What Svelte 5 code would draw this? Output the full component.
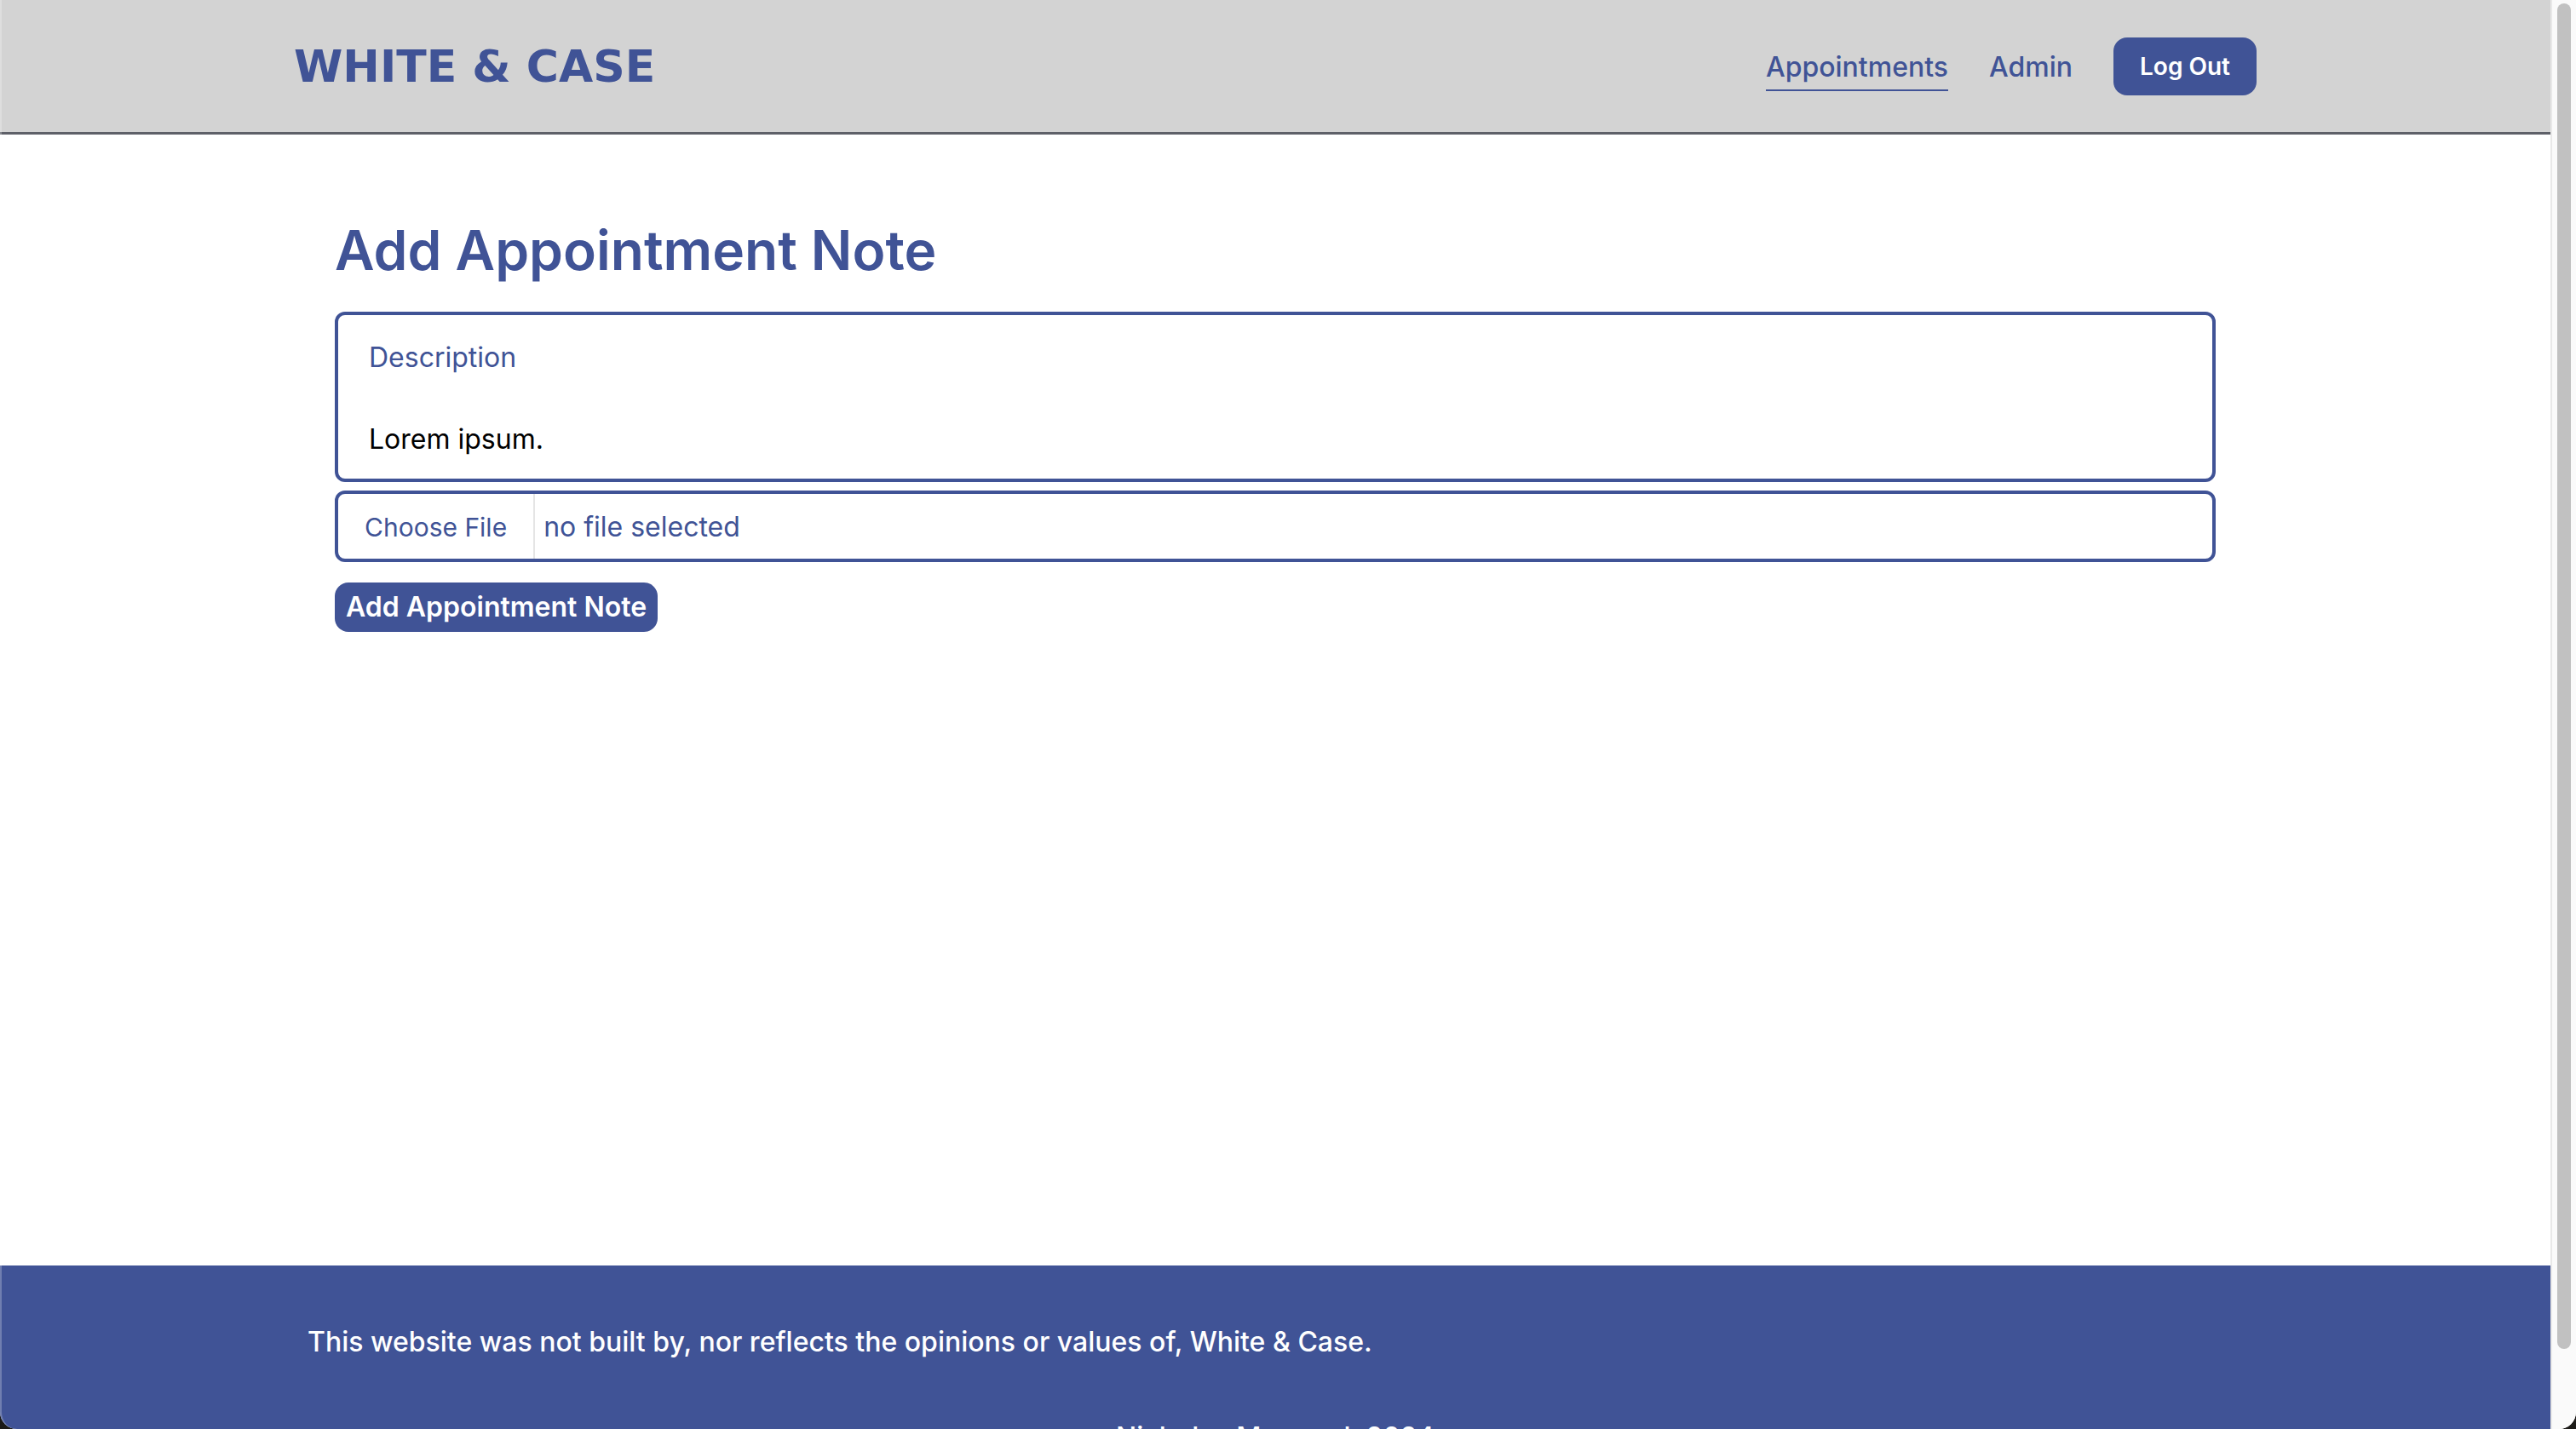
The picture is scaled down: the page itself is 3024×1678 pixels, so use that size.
<script>
  let description = $state('Lorem ipsum.');
  let files = $state(null);
  let fileName = $derived(files?.[0]?.name ?? 'no file selected');
</script>

<div class="window">
  <div class="page">
    <header>
      <div class="bar">
        <a class="logo" href="/">WHITE &amp; CASE</a>
        <nav>
          <a class="current" href="/appointments" aria-current="page">Appointments</a>
          <a href="/admin">Admin</a>
          <button class="logout" type="button">Log Out</button>
        </nav>
      </div>
    </header>

    <main>
      <h1>Add Appointment Note</h1>
      <form onsubmit={(e) => e.preventDefault()}>
        <div class="field">
          <label for="description">Description</label>
          <input id="description" type="text" bind:value={description} />
        </div>
        <label class="file">
          <span class="choose">Choose File</span>
          <span class="name">{fileName}</span>
          <input type="file" bind:files />
        </label>
        <button class="submit" type="submit">Add Appointment Note</button>
      </form>
    </main>

    <footer>
      <p>This website was not built by, nor reflects the opinions or values of, White &amp; Case.</p>
      <p class="credit">Nicholas Maynard, 2024</p>
    </footer>
  </div>
  <div class="track"><div class="thumb"></div></div>
</div>

<style>
  :global(body) {
    background: #1c1b18;
    overflow: hidden;
  }

  .window {
    --blue: #405396;
    position: relative;
    display: flex;
    height: 100vh;
    overflow: hidden;
    border-radius: 0 0 20px 20px;
    background: #fff;
    color: var(--blue);
    font-family: Inter, 'Liberation Sans', sans-serif;
    font-size: 32px;
    line-height: 48px;
  }

  .window::after {
    content: '';
    position: absolute;
    inset: 0;
    border-left: 2px solid rgba(255, 255, 255, 0.25);
    border-radius: 0 0 20px 20px;
    pointer-events: none;
  }

  .page {
    flex: 1;
    display: flex;
    flex-direction: column;
    min-width: 0;
    overflow: hidden;
  }

  header {
    flex: none;
    background: #d3d3d3;
    border-bottom: 3px solid #5e6068;
  }

  .bar {
    display: flex;
    align-items: center;
    justify-content: space-between;
    max-width: 2304px;
    margin: 0 auto;
    padding: 44px 0 43px;
  }

  .logo {
    color: var(--blue);
    font-family: 'DejaVu Sans', sans-serif;
    font-size: 52px;
    font-weight: 700;
    text-decoration: none;
  }

  nav {
    display: flex;
    align-items: center;
    gap: 48px;
  }

  nav a {
    padding: 6px 0 2px;
    border-bottom: 2px solid transparent;
    color: var(--blue);
    font-weight: 500;
    text-decoration: none;
  }

  nav a.current {
    border-color: var(--blue);
  }

  button {
    border: 0;
    border-radius: 16px;
    background: var(--blue);
    color: #fff;
    font-family: inherit;
    font-weight: 600;
  }

  .logout {
    padding: 14px 31px;
    font-size: 28px;
    line-height: 40px;
  }

  main {
    flex: none;
    box-sizing: border-box;
    width: 100%;
    max-width: 2208px;
    min-height: 1328px;
    margin: 0 auto;
    padding-top: 96px;
  }

  h1 {
    margin: 0 0 32px;
    font-size: 64px;
    font-weight: 600;
    line-height: 80px;
  }

  form {
    display: flex;
    flex-direction: column;
    align-items: flex-start;
  }

  .field,
  .file {
    box-sizing: border-box;
    width: 100%;
    border: 4px solid var(--blue);
    border-radius: 12px;
  }

  .field {
    display: flex;
    flex-direction: column;
    gap: 48px;
    padding: 26px 36px 22px;
  }

  .field input {
    padding: 0;
    border: 0;
    outline: 0;
    background: none;
    color: #000;
    font: inherit;
  }

  .file {
    position: relative;
    display: flex;
    margin: 10px 0 24px;
    overflow: hidden;
    line-height: 74px;
  }

  .choose {
    padding: 2px 31px 0;
    border-right: 2px solid #e5e5e5;
    font-size: 30px;
  }

  .name {
    padding: 2px 0 0 10px;
  }

  .file input {
    position: absolute;
    inset: 0;
    opacity: 0;
  }

  .submit {
    padding: 5px 13px;
    font-size: 32px;
    line-height: 48px;
  }

  footer {
    flex: none;
    padding: 66px 0 64px;
    background: var(--blue);
    color: #fff;
    font-weight: 500;
  }

  footer p {
    max-width: 2272px;
    margin: 0 auto 64px;
  }

  footer .credit {
    margin-bottom: 0;
    text-align: center;
  }

  .track {
    flex: none;
    display: flex;
    justify-content: center;
    box-sizing: border-box;
    width: 30px;
    padding: 4px 0 94px;
    border-left: 2px solid #e8e8e8;
    background: #fafafa;
  }

  .thumb {
    width: 16px;
    border-radius: 8px;
    background: #c1c1c1;
  }
</style>
